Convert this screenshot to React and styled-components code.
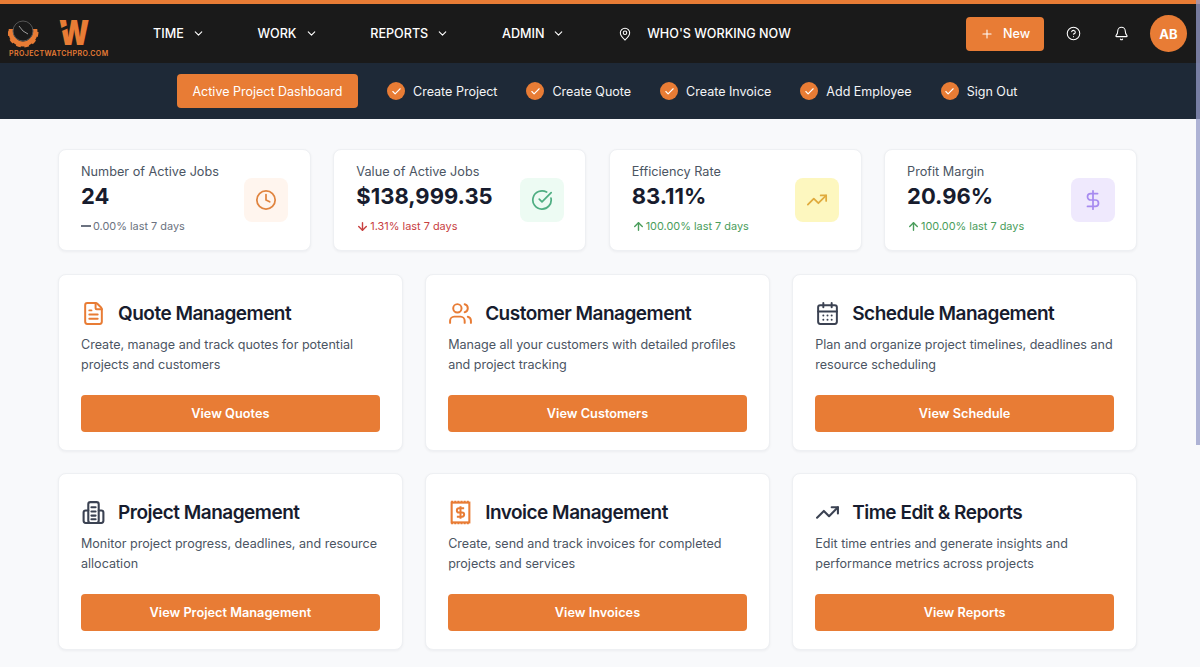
import React from 'react';
import styled, { createGlobalStyle } from 'styled-components';
import {
  ArrowDown,
  ArrowUp,
  Bell,
  CalendarDays,
  Check,
  ChevronDown,
  CircleCheckBig,
  CircleHelp,
  Clock,
  DollarSign,
  FileText,
  MapPin,
  Plus,
  TrendingUp,
  Users,
} from 'lucide-react';

const ORANGE = '#e87c35';

const GlobalStyle = createGlobalStyle`
  * { box-sizing: border-box; }
  html, body { margin: 0; padding: 0; height: 100%; overflow: hidden; }
  body {
    background: #f8f9fb;
    font-family: Inter, "Liberation Sans", sans-serif;
    color: #111827;
  }
`;

const Page = styled.div`
  height: 667px;
  overflow: hidden;
`;

const ScrollThumb = styled.div`
  position: fixed;
  top: 0;
  right: 0;
  width: 4px;
  height: 445px;
  background: rgba(150, 155, 200, 0.75);
`;

const TopBar = styled.header`
  height: 63px;
  background: #1a1a1a;
  border-top: 4px solid ${ORANGE};
  display: flex;
  align-items: center;
  padding: 0 13px 0 8px;
`;

const Logo = styled.div`
  width: 101px;
  display: flex;
  flex-direction: column;
  margin-top: 3px;
`;

const LogoTop = styled.div`
  height: 36px;
  display: flex;
  align-items: flex-end;
`;

const LogoW = styled.span`
  position: relative;
  display: block;
  margin: 0 0 4px 11px;
  font-size: 34px;
  font-weight: 900;
  line-height: 25px;
  color: ${ORANGE};
  transform: scaleX(0.82);
  transform-origin: left bottom;

  &::after {
    content: '';
    position: absolute;
    left: 1px;
    top: 7px;
    width: 10px;
    height: 2.5px;
    background: #1a1a1a;
    transform: rotate(-20deg);
  }
`;

const LogoText = styled.span`
  font-size: 7px;
  font-weight: 600;
  line-height: 9px;
  letter-spacing: 0.42px;
  color: ${ORANGE};
  white-space: nowrap;
  margin-left: 1px;
`;

const NavList = styled.nav`
  display: flex;
  align-items: center;
  gap: 52.75px;
  margin-left: 44px;
`;

const NavItem = styled.a`
  display: flex;
  align-items: center;
  gap: 8px;
  color: #fff;
  font-size: 12.6px;
  font-weight: 500;
  white-space: nowrap;
`;

const PinItem = styled(NavItem)`
  gap: 15px;
`;

const TopRight = styled.div`
  margin-left: auto;
  display: flex;
  align-items: center;
`;

const NewButton = styled.button`
  width: 78px;
  height: 34px;
  background: ${ORANGE};
  border: 0;
  border-radius: 4px;
  color: #fff;
  font: 500 12.6px Inter, sans-serif;
  display: flex;
  align-items: center;
  justify-content: center;
  gap: 9px;
`;

const IconGroup = styled.div`
  display: flex;
  padding: 0 5px;
`;

const IconSlot = styled.span`
  width: 48px;
  display: flex;
  justify-content: center;
  color: #fff;
`;

const Avatar = styled.span`
  width: 37px;
  height: 37px;
  border-radius: 50%;
  background: ${ORANGE};
  color: #fff;
  font-size: 13px;
  font-weight: 700;
  display: flex;
  align-items: center;
  justify-content: center;
`;

const SubBar = styled.div`
  height: 56px;
  background: #1e2937;
  display: flex;
  align-items: center;
  gap: 29px;
  padding-left: 177px;
`;

const DashboardButton = styled.button`
  width: 181px;
  height: 34px;
  background: ${ORANGE};
  border: 0;
  border-radius: 4px;
  color: #fff;
  font: 400 12.5px Inter, sans-serif;
`;

const QuickLink = styled.a`
  display: flex;
  align-items: center;
  gap: 8px;
  color: #f3f4f6;
  font-size: 12.53px;
  white-space: nowrap;
`;

const CheckDot = styled.span`
  width: 18px;
  height: 18px;
  border-radius: 50%;
  background: ${ORANGE};
  color: #fff;
  display: flex;
  align-items: center;
  justify-content: center;
`;

const Main = styled.main`
  padding: 30px 63px 0 58px;
  display: flex;
  flex-direction: column;
  gap: 23px;
`;

const StatGrid = styled.section`
  display: grid;
  grid-template-columns: repeat(4, 1fr);
  gap: 22.4px;
`;

const StatCard = styled.div`
  height: 102px;
  background: #fff;
  border: 1px solid #eef0f3;
  border-radius: 8px;
  box-shadow: 0 1px 3px rgba(17, 24, 39, 0.05);
  padding: 15px 21.5px 0 22px;
  display: flex;
  justify-content: space-between;
  align-items: flex-start;
`;

const StatLabel = styled.div`
  font-size: 12.7px;
  line-height: 14px;
  color: #4b5563;
`;

const StatValue = styled.div`
  font-size: 22px;
  line-height: 26px;
  font-weight: 700;
  color: #171c2e;
  margin-top: 4px;
`;

const StatTrend = styled.div`
  display: flex;
  align-items: center;
  gap: 1px;
  font-size: 10.9px;
  line-height: 14px;
  margin-top: 10px;
  white-space: nowrap;
  color: ${({ $tone }) =>
    $tone === 'down' ? '#c8403f' : $tone === 'up' ? '#4a9d5b' : '#6b7280'};
`;

const StatIcon = styled.div`
  width: 44px;
  height: 44px;
  border-radius: 8px;
  margin-top: 13px;
  flex-shrink: 0;
  display: flex;
  align-items: center;
  justify-content: center;
  background: ${({ $bg }) => $bg};
  color: ${({ $fg }) => $fg};
`;

const Dash = styled.span`
  width: 10px;
  height: 2.5px;
  background: #6b7280;
  margin-right: 1px;
`;

const ManageGrid = styled.section`
  display: grid;
  grid-template-columns: repeat(3, 1fr);
  gap: 22.5px 22.4px;
`;

const ManageCard = styled.div`
  height: 176.5px;
  background: #fff;
  border: 1px solid #eef0f3;
  border-radius: 8px;
  box-shadow: 0 1px 3px rgba(17, 24, 39, 0.05);
  padding: 22px 22px 0;
  display: flex;
  flex-direction: column;
`;

const ManageHead = styled.div`
  display: flex;
  align-items: center;
  gap: 12px;
  height: 32px;
`;

const ManageIcon = styled.span`
  width: 25px;
  display: flex;
  justify-content: center;
  color: ${({ $color }) => $color};
`;

const ManageTitle = styled.h2`
  margin: 0;
  font-size: 19px;
  font-weight: 600;
  letter-spacing: -0.5px;
  color: #171c2e;
  white-space: nowrap;
`;

const ManageText = styled.p`
  margin: 6px 0 0;
  height: 39px;
  font-size: 12.55px;
  line-height: 19.5px;
  color: #4b5563;
`;

const ManageButton = styled.button`
  margin-top: 21px;
  height: 37px;
  width: 100%;
  background: ${ORANGE};
  border: 0;
  border-radius: 4px;
  color: #fff;
  font: 600 12.75px Inter, sans-serif;
`;

const GearMark = () => (
  <svg width="40" height="36" viewBox="0 0 40 36">
    <defs>
      <clipPath id="gearLower">
        <rect x="0" y="16" width="40" height="20" />
      </clipPath>
    </defs>
    <g clipPath="url(#gearLower)" fill="none" stroke={ORANGE}>
      <circle cx="15" cy="19" r="12" strokeWidth="5" />
      <circle cx="15" cy="19" r="14" strokeWidth="3" strokeDasharray="4.5 3.5" />
    </g>
    <circle cx="15" cy="18" r="10" fill="#1a1a1a" stroke="#565656" />
    <path d="M15 18l-4-5M15 18l5 3" stroke="#9a9a9a" strokeWidth="1" />
  </svg>
);

const ProjectIcon = () => (
  <svg width="25" height="25" viewBox="0 0 24 24" fill="none" stroke="currentColor" strokeWidth="2" strokeLinecap="round" strokeLinejoin="round">
    <rect x="7" y="2" width="10" height="20" rx="2" />
    <path d="M7 10H4.5a2 2 0 0 0-2 2v8a2 2 0 0 0 2 2h15a2 2 0 0 0 2-2v-8a2 2 0 0 0-2-2H17" />
    <path d="M10 7h4M10 11h4M10 15h4M10 18.5h4" />
  </svg>
);

const InvoiceIcon = () => (
  <svg width="25" height="25" viewBox="0 0 24 24" fill="none" stroke="currentColor" strokeWidth="2">
    <rect x="3.5" y="2.5" width="17" height="19" />
    <path d="M3 1.5h18M3 22.5h18" strokeWidth="1.5" strokeDasharray="2 1" />
    <path
      d="M12 6v12M15.5 8H10.5a2 2 0 0 0 0 4h3a2 2 0 0 1 0 4H8.5"
      strokeWidth="1.9"
    />
  </svg>
);

const TrendIcon = () => <TrendingUp size={25} strokeWidth={2} />;

const navItems = ['TIME', 'WORK', 'REPORTS', 'ADMIN'];
const quickLinks = ['Create Project', 'Create Quote', 'Create Invoice', 'Add Employee', 'Sign Out'];

const stats = [
  { label: 'Number of Active Jobs', value: '24', trend: '0.00% last 7 days', tone: 'flat', Icon: Clock, bg: '#fff5ee', fg: '#e0843f' },
  { label: 'Value of Active Jobs', value: '$138,999.35', trend: '1.31% last 7 days', tone: 'down', Icon: CircleCheckBig, bg: '#edfbf3', fg: '#4fae82' },
  { label: 'Efficiency Rate', value: '83.11%', trend: '100.00% last 7 days', tone: 'up', Icon: TrendingUp, bg: '#fdf7bf', fg: '#e0ab3d' },
  { label: 'Profit Margin', value: '20.96%', trend: '100.00% last 7 days', tone: 'up', Icon: DollarSign, bg: '#efe9fd', fg: '#a78bf0' },
];

const cards = [
  { title: 'Quote Management', text: 'Create, manage and track quotes for potential projects and customers', action: 'View Quotes', icon: <FileText size={25} strokeWidth={1.9} />, color: ORANGE },
  { title: 'Customer Management', text: 'Manage all your customers with detailed profiles and project tracking', action: 'View Customers', icon: <Users size={25} strokeWidth={1.9} />, color: ORANGE },
  { title: 'Schedule Management', text: 'Plan and organize project timelines, deadlines and resource scheduling', action: 'View Schedule', icon: <CalendarDays size={25} strokeWidth={1.9} />, color: '#3b4252' },
  { title: 'Project Management', text: 'Monitor project progress, deadlines, and resource allocation', action: 'View Project Management', icon: <ProjectIcon />, color: '#3b4252' },
  { title: 'Invoice Management', text: 'Create, send and track invoices for completed projects and services', action: 'View Invoices', icon: <InvoiceIcon />, color: ORANGE },
  { title: 'Time Edit & Reports', text: 'Edit time entries and generate insights and performance metrics across projects', action: 'View Reports', icon: <TrendIcon />, color: '#3b4252' },
];

const TrendGlyph = ({ tone }) => {
  if (tone === 'down') return <ArrowDown size={13} strokeWidth={2.6} />;
  if (tone === 'up') return <ArrowUp size={13} strokeWidth={2.6} />;
  return <Dash />;
};

const App = () => (
  <Page>
    <GlobalStyle />
    <TopBar>
      <Logo>
        <LogoTop>
          <GearMark />
          <LogoW>W</LogoW>
        </LogoTop>
        <LogoText>PROJECTWATCHPRO.COM</LogoText>
      </Logo>
      <NavList>
        {navItems.map(item => (
          <NavItem key={item}>
            {item}
            <ChevronDown size={13} strokeWidth={2} />
          </NavItem>
        ))}
        <PinItem>
          <MapPin size={14} strokeWidth={1.8} />
          WHO'S WORKING NOW
        </PinItem>
      </NavList>
      <TopRight>
        <NewButton>
          <Plus size={14} strokeWidth={1.8} />
          New
        </NewButton>
        <IconGroup>
          <IconSlot>
            <CircleHelp size={15} strokeWidth={1.7} />
          </IconSlot>
          <IconSlot>
            <Bell size={15} strokeWidth={1.7} />
          </IconSlot>
        </IconGroup>
        <Avatar>AB</Avatar>
      </TopRight>
    </TopBar>

    <SubBar>
      <DashboardButton>Active Project Dashboard</DashboardButton>
      {quickLinks.map(link => (
        <QuickLink key={link}>
          <CheckDot>
            <Check size={11} strokeWidth={2.4} />
          </CheckDot>
          {link}
        </QuickLink>
      ))}
    </SubBar>

    <Main>
      <StatGrid>
        {stats.map(({ label, value, trend, tone, Icon, bg, fg }) => (
          <StatCard key={label}>
            <div>
              <StatLabel>{label}</StatLabel>
              <StatValue>{value}</StatValue>
              <StatTrend $tone={tone}>
                <TrendGlyph tone={tone} />
                {trend}
              </StatTrend>
            </div>
            <StatIcon $bg={bg} $fg={fg}>
              <Icon size={22} strokeWidth={1.9} />
            </StatIcon>
          </StatCard>
        ))}
      </StatGrid>

      <ManageGrid>
        {cards.map(card => (
          <ManageCard key={card.title}>
            <ManageHead>
              <ManageIcon $color={card.color}>{card.icon}</ManageIcon>
              <ManageTitle>{card.title}</ManageTitle>
            </ManageHead>
            <ManageText>{card.text}</ManageText>
            <ManageButton>{card.action}</ManageButton>
          </ManageCard>
        ))}
      </ManageGrid>
    </Main>
    <ScrollThumb />
  </Page>
);

export default App;
